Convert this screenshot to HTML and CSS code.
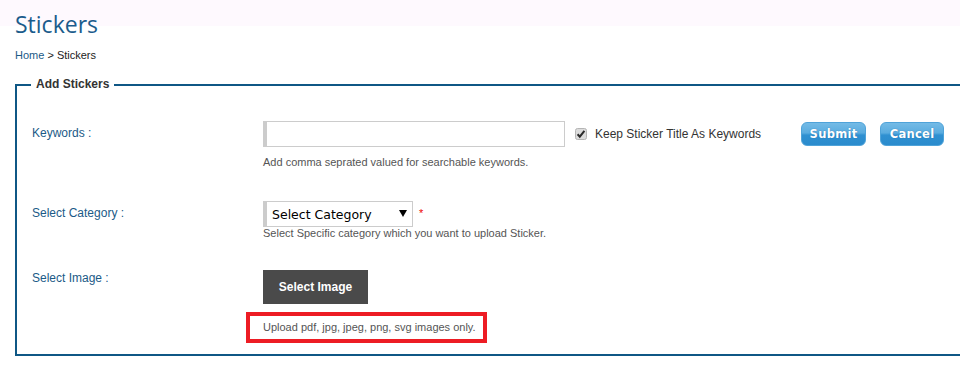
FILE: index.html
```html
<!DOCTYPE html>
<html>
<head>
<meta charset="utf-8">
<link rel="stylesheet" href="styles.css">
</head>
<body>
<h1 class="title">Stickers</h1>
<div class="crumbs"><a class="crumb-link" href="#">Home</a> &gt; Stickers</div>
<fieldset class="box">
  <legend class="box-legend">Add Stickers</legend>
  <div class="row row-keywords">
    <label class="lbl lbl-keywords">Keywords :</label>
    <div class="field">
      <div class="line">
        <input class="txt" type="text">
        <span class="chk"><svg width="12" height="12" viewBox="0 0 12 12"><rect x="0.5" y="0.5" width="11" height="11" rx="2" fill="#dcdcdc" stroke="#b5b5b5"/><path d="M2.6 6.2 L4.8 8.6 L9.4 2.8" fill="none" stroke="#2b2b2b" stroke-width="2"/></svg></span>
        <span class="chk-text">Keep Sticker Title As Keywords</span>
        <button class="btn btn-submit">Submit</button>
        <button class="btn btn-cancel">Cancel</button>
      </div>
      <div class="help help-keywords">Add comma seprated valued for searchable keywords.</div>
    </div>
  </div>
  <div class="row row-category">
    <label class="lbl lbl-cat">Select Category :</label>
    <div class="field">
      <div class="line">
        <span class="sel-wrap">
          <select class="sel"><option>Select Category</option></select>
          <svg class="sel-arrow" width="8" height="7" viewBox="0 0 8 7"><path d="M0 0 H8 L4 7 Z" fill="#000"/></svg>
        </span>
        <span class="req">*</span>
      </div>
      <div class="help help-cat">Select Specific category which you want to upload Sticker.</div>
    </div>
  </div>
  <div class="row row-image">
    <label class="lbl lbl-img">Select Image :</label>
    <div class="field">
      <button class="img-btn">Select Image</button>
      <div class="note">Upload pdf, jpg, jpeg, png, svg images only.</div>
    </div>
  </div>
</fieldset>
</body>
</html>
```
FILE: styles.css
```css
html {
  overflow: hidden;
  background: #ffffff linear-gradient(#fef9fe, #fef9fe) no-repeat;
  background-size: 100% 26px;
}
body {
  margin: 0;
  font-family: "Liberation Sans", Arial, sans-serif;
  color: #333;
}
.title {
  margin: 10px 0 0 15px;
  font-family: "Open Sans", "Liberation Sans", sans-serif;
  font-weight: normal;
  font-size: 23px;
  line-height: 28px;
  color: #1b5c8c;
}
.crumbs {
  margin: 10px 0 0 15px;
  font-size: 11px;
  line-height: 14px;
  color: #222;
}
.crumb-link { color: #1b5a87; text-decoration: none; }
.box {
  box-sizing: border-box;
  margin: 15px 0 0 15px;
  width: calc(100% - 15px);
  min-width: 0;
  border: 2px solid #0f5785;
  border-right: none;
  padding: 29px 0 11px 15px;
}
.box-legend {
  margin-left: -1px;
  padding: 0 5px;
  font-size: 12px;
  font-weight: bold;
  line-height: 15px;
  color: #333;
}
.row {
  display: grid;
  grid-template-columns: 231px 1fr;
}
.row-category { margin-top: 32px; }
.row-image { margin-top: 30px; }
.lbl {
  font-size: 12px;
  line-height: 16px;
  color: #1b5a87;
}
.lbl-keywords, .lbl-cat { padding-top: 4px; }
.lbl-img { padding-top: 0; }
.line {
  display: flex;
  align-items: center;
}
.txt {
  box-sizing: border-box;
  width: 302px;
  height: 26px;
  margin: 0;
  border: 1px solid #cccccc;
  border-left: 4px solid #cccccc;
  background: #fff;
  outline: none;
}
.chk { margin-left: 10px; display: flex; }
.chk-text {
  margin-left: 8px;
  font-size: 12px;
  color: #333;
}
.btn {
  box-sizing: border-box;
  height: 24px;
  margin: 0;
  padding: 0;
  border: 1px solid #4fa3d9;
  border-radius: 6px;
  background: linear-gradient(#74bbe6 0%, #5aacdf 45%, #2f90d1 55%, #2a8bcd 100%);
  color: #fff;
  font-family: "DejaVu Sans", Verdana, sans-serif;
  font-weight: bold;
  font-size: 11.5px;
  text-shadow: 0 0 1px #1c6ca6;
  letter-spacing: 0.3px;
}
.btn-submit { margin-left: 40px; width: 65px; }
.btn-cancel { margin-left: 14px; width: 64px; }
.help {
  font-size: 11px;
  line-height: 14px;
  color: #555;
}
.help-keywords { margin-top: 8px; }
.help-cat { margin-top: -1px; }
.sel-wrap {
  position: relative;
  display: inline-block;
}
.sel {
  -webkit-appearance: none;
  appearance: none;
  box-sizing: border-box;
  width: 150px;
  height: 26px;
  margin: 0;
  padding: 0 0 0 5px;
  border: 1px solid #cccccc;
  border-left: 4px solid #cccccc;
  background: #fff;
  border-radius: 0;
  font-family: "DejaVu Sans", Verdana, sans-serif;
  font-size: 12.5px;
  color: #000;
  outline: none;
}
.sel-arrow {
  position: absolute;
  left: 136px;
  top: 9px;
}
.req {
  margin-left: 6px;
  color: #e00;
  font-size: 11px;
  position: relative;
  top: -1px;
}
.img-btn {
  display: block;
  box-sizing: border-box;
  width: 105px;
  height: 34px;
  margin: 0;
  border: none;
  background: #4a4a4a;
  color: #fff;
  font-family: "Liberation Sans", Arial, sans-serif;
  font-weight: bold;
  font-size: 12px;
}
.note {
  box-sizing: border-box;
  width: 241px;
  height: 31px;
  margin: 8px 0 0 -17px;
  padding: 0 0 0 13px;
  border: 4px solid #ed1c24;
  font-size: 11px;
  line-height: 23px;
  color: #555;
}
```
